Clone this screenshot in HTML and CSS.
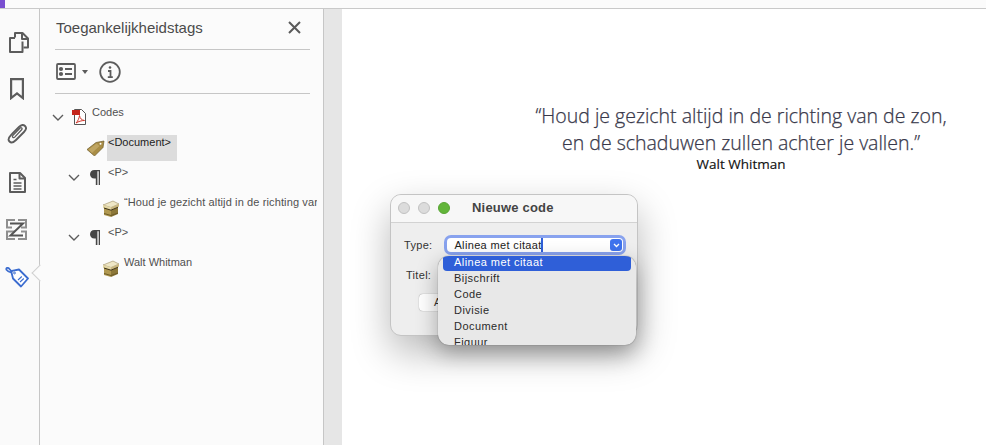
FILE: index.html
```html
<!DOCTYPE html>
<html lang="nl">
<head>
<meta charset="utf-8">
<title>Toegankelijkheidstags</title>
<link rel="stylesheet" href="styles.css">
</head>
<body>
<div class="topbar"><span class="accent"></span></div>
<div class="main">
  <nav class="rail">
    <svg class="rail-icon r1" width="20" height="21" viewBox="0 0 20 21" fill="none" stroke="#5c5c5c" stroke-width="2" stroke-linejoin="round"><path d="M6 5.500V1h7.500l5.500 5.500V15.500h-4.500"/><path d="M13 1.500V7h5.500"/><path d="M6 6H1v14h12.500V9.500"/></svg>
    <svg class="rail-icon r2" width="14" height="22" viewBox="0 0 14 22" fill="none" stroke="#5c5c5c" stroke-width="2.200"><path d="M1.100 1.100h11.800v19L7 15.500l-5.900 4.600z"/></svg>
    <svg class="rail-icon r3" width="20" height="21" viewBox="0 0 20 21" fill="none" stroke="#5c5c5c" stroke-width="1.900"><path d="M12 4 4.200 11.800C1 15 1 17 2.500 18.500S6 20 9 17L17 9c2.500-2.500 2.500-4.500 1-6S14.500 1.500 12 4L4.800 11.200"/><path d="M14.800 6.500c1-1-.7-2.700-1.700-1.500L6 12.300c-1.500 1.500.3 3.200 1.700 1.800L14.800 6.500z" stroke-width="1.300"/></svg>
    <svg class="rail-icon r4" width="17" height="21" viewBox="0 0 17 21" fill="none" stroke="#5c5c5c" stroke-width="2" stroke-linejoin="round"><path d="M1 1h10l5 5v14H1z"/><path d="M10.500 1.500V6.500H16"/><path d="M4.500 7.500h3M4.500 11h8M4.500 14h8M4.500 17h8" stroke-width="1.500"/></svg>
    <svg class="rail-icon r5" width="21" height="21" viewBox="0 0 21 21" fill="none" stroke="#8f8f8f" stroke-width="2"><path d="M9 1H1v7.500h5M12 1h8v7.500h-5"/><path d="M9 12.500H1V20h8M15 12.500h5V20h-8"/><path d="M4 4.500h13L4.500 16.500H17" stroke="#555" stroke-width="2"/></svg>
    <div class="rail-active">
      <svg class="rail-icon" width="24" height="22" viewBox="0 0 24 22" fill="none" stroke="#3b6ccf" stroke-width="1.800" stroke-linejoin="round"><path d="M7 6 4.500 3C3 1 .5 2 1.500 3.800 2.300 5 4 6 6 6.500"/><path d="M7 4.800 14 3.500 23 12.500 16 20.500 8 12.500 6.500 6.500z" fill="#fff"/><circle cx="9.500" cy="7" r=".9" stroke-width="1"/><path d="M13 14l3.800-3.500M15 16l3.800-3.500" stroke-width="1.100"/></svg>
    </div>
  </nav>
  <aside class="panel">
    <header class="panel-head">
      <h1 class="panel-title">Toegankelijkheidstags</h1>
      <svg width="13" height="13" viewBox="0 0 13 13" stroke="#5a5a5a" stroke-width="2"><path d="M1 1l11 11M12 1 1 12"/></svg>
    </header>
    <div class="toolbar">
      <svg width="20" height="17" viewBox="0 0 20 17" fill="none" stroke="#5c5c5c" stroke-width="1.800"><rect x="1" y="1" width="18" height="15" rx="1"/><path d="M9 6h7M9 11h7"/><circle cx="5" cy="6" r="1.200" fill="#5c5c5c"/><circle cx="5" cy="11" r="1.200" fill="#5c5c5c"/></svg>
      <span class="caret"></span>
      <svg class="info" width="22" height="22" viewBox="0 0 22 22" fill="none" stroke="#5c5c5c"><circle cx="11" cy="11" r="9.800" stroke-width="1.800"/><path d="M9 10h2.500v6M8.800 16.200h5" stroke-width="1.800"/><circle cx="11" cy="6.500" r="1.300" fill="#5c5c5c" stroke="none"/></svg>
    </div>
    <ul class="tree">
      <li class="row lvl0">
        <svg class="chev" width="12" height="7" viewBox="0 0 12 7" fill="none" stroke="#5c5c5c" stroke-width="1.400"><path d="M1 1l5 5 5-5"/></svg>
        <svg class="ico pdf" width="14" height="16" viewBox="0 0 14 16" fill="none"><path d="M2.500.5h7l4 4v11h-11z" fill="#fff" stroke="#555"/><rect x="0" y="1" width="8" height="5" fill="#c5251b"/><path d="M4 14c2-2 3-4.500 3.500-7.500.5 3 2 4.500 5 5-3 0-6 1-8.500 2.500z" stroke="#d2382c"/></svg>
        <span class="label">Codes</span>
      </li>
      <li class="row lvl1 doc">
        <svg class="ico" width="18" height="16" viewBox="0 0 18 16"><path d="M0 9.500 9 2.500 17 1l-1 6.500L7.500 16z" fill="#a98d45" stroke="#6f5d2c" stroke-width=".7"/><path d="M1.500 9.500 9.500 3.500l3 2.500L5 13z" fill="#bfa562"/><circle cx="13.500" cy="3.800" r="1" fill="#fff"/></svg>
        <span class="label selected">&lt;Document&gt;</span>
      </li>
      <li class="row lvl1b">
        <svg class="chev" width="12" height="7" viewBox="0 0 12 7" fill="none" stroke="#5c5c5c" stroke-width="1.400"><path d="M1 1l5 5 5-5"/></svg>
        <svg class="ico para" width="10" height="15" viewBox="0 0 10 15"><path d="M4.500 0H10v15H8.700V1.200H7.400V15H5.800V8.500H4.500C1.500 8.500 0 6.200 0 4.200S1.500 0 4.500 0z" fill="#464646"/></svg>
        <span class="label">&lt;P&gt;</span>
      </li>
      <li class="row lvl2">
        <svg class="ico" width="16" height="17" viewBox="0 0 16 17"><path d="M0 5 10 1l6 3-8 3.500z" fill="#efe7c6" stroke="#8a7a4a" stroke-width=".5"/><path d="M0 5l8 2.500v2.500L0 8z" fill="#e2d6a4"/><path d="M8 7.500 16 4v2.500L8 10z" fill="#c9b77f"/><path d="M1 8l7 2.200V17l-7-2z" fill="#b09850"/><path d="M8 10.200l7-3V14l-7 3z" fill="#8c7738"/><path d="M1 8l7 2.200 7-3" fill="none" stroke="#3e3214"/><path d="M1 13.500l7 2 7-2.500" fill="none" stroke="#6d5c28"/></svg>
        <span class="label clip">“Houd je gezicht altijd in de richting van de zon,</span>
      </li>
      <li class="row lvl1b">
        <svg class="chev" width="12" height="7" viewBox="0 0 12 7" fill="none" stroke="#5c5c5c" stroke-width="1.400"><path d="M1 1l5 5 5-5"/></svg>
        <svg class="ico para" width="10" height="15" viewBox="0 0 10 15"><path d="M4.500 0H10v15H8.700V1.200H7.400V15H5.800V8.500H4.500C1.500 8.500 0 6.200 0 4.200S1.500 0 4.500 0z" fill="#464646"/></svg>
        <span class="label">&lt;P&gt;</span>
      </li>
      <li class="row lvl2">
        <svg class="ico" width="16" height="17" viewBox="0 0 16 17"><path d="M0 5 10 1l6 3-8 3.500z" fill="#efe7c6" stroke="#8a7a4a" stroke-width=".5"/><path d="M0 5l8 2.500v2.500L0 8z" fill="#e2d6a4"/><path d="M8 7.500 16 4v2.500L8 10z" fill="#c9b77f"/><path d="M1 8l7 2.200V17l-7-2z" fill="#b09850"/><path d="M8 10.200l7-3V14l-7 3z" fill="#8c7738"/><path d="M1 8l7 2.200 7-3" fill="none" stroke="#3e3214"/><path d="M1 13.500l7 2 7-2.500" fill="none" stroke="#6d5c28"/></svg>
        <span class="label">Walt Whitman</span>
      </li>
    </ul>
  </aside>
  <div class="gutter"></div>
  <main class="page">
    <blockquote class="quote">“Houd je gezicht altijd in de richting van de zon,<br>en de schaduwen zullen achter je vallen.”</blockquote>
    <p class="author">Walt Whitman</p>
  </main>
</div>

<section class="dialog">
  <div class="dialog-title">
    <span class="light"></span><span class="light"></span><span class="light green"></span>
    <span class="dialog-name">Nieuwe code</span>
  </div>
  <div class="form-row type-row">
    <span class="form-label">Type:</span>
    <div class="combo">
      <span class="combo-text">Alinea met citaat</span><span class="cursor"></span>
      <span class="combo-btn"><svg width="7" height="5" viewBox="0 0 7 5" fill="none" stroke="#fff" stroke-width="1.300"><path d="M1 1l2.500 2.500L6 1"/></svg></span>
    </div>
  </div>
  <div class="form-row title-row"><span class="form-label">Titel:</span></div>
  <div class="btn-row"><span class="btn">Annuleren</span></div>
  <ul class="menu">
    <li class="menu-item active">Alinea met citaat</li>
    <li class="menu-item">Bijschrift</li>
    <li class="menu-item">Code</li>
    <li class="menu-item">Divisie</li>
    <li class="menu-item">Document</li>
    <li class="menu-item">Figuur</li>
  </ul>
</section>
</body>
</html>
```
FILE: styles.css
```css
* { box-sizing: border-box; }
html, body { margin: 0; padding: 0; height: 100%; overflow: hidden; background: #fff; }
body { font-family: "Liberation Sans", Arial, sans-serif; display: flex; flex-direction: column; }

.topbar { height: 9px; flex: none; background: #fbfbfb; border-bottom: 1px solid #c9c9c9; }
.accent { display: block; width: 5px; height: 8px; background: #7a4fd0; }

.main { flex: 1; display: flex; min-height: 0; }

.rail { width: 40px; flex: none; background: #fafafa; border-right: 1px solid #c6c6c6; display: flex; flex-direction: column; align-items: flex-start; position: relative; }
.rail-icon { display: block; flex: none; }
.r1 { margin: 23px 0 0 9px; }
.r2 { margin: 25px 0 0 10px; }
.r3 { margin: 23px 0 0 7px; }
.r4 { margin: 28px 0 0 9px; }
.r5 { margin: 26px 0 0 6px; }
.rail-active { margin: 26px 0 0 5px; }
.rail-active::before { content: ""; position: absolute; left: 34px; top: 258px; width: 11px; height: 11px; background: #fbfbfb; border-left: 1px solid #cfcfcf; border-bottom: 1px solid #cfcfcf; transform: rotate(45deg); }

.panel { width: 284px; flex: none; background: #fbfbfb; border-right: 1px solid #c6c6c6; padding: 0 13px 0 15px; display: flex; flex-direction: column; }
.panel-head { height: 41px; flex: none; display: flex; align-items: center; justify-content: space-between; border-bottom: 1px solid #c6c6c6; padding: 0 9px 4px 1px; }
.panel-title { margin: 0; font-size: 15px; font-weight: 400; color: #4b4b4b; }

.toolbar { height: 44px; flex: none; display: flex; align-items: center; border-bottom: 1px solid #c6c6c6; padding: 0 1px; }
.caret { width: 0; height: 0; border: 3.500px solid transparent; border-top: 4px solid #5c5c5c; border-bottom: 0; margin-left: 6px; }
.info { margin-left: 11px; }

.tree { list-style: none; margin: 0; padding: 4px 0 0; }
.row { height: 30px; display: flex; align-items: center; font-size: 11px; color: #505050; position: relative; white-space: nowrap; }
.chev { flex: none; margin-top: 8px; }
.ico { flex: none; margin-top: 8px; }
.label { align-self: flex-start; line-height: 13px; margin-top: 8px; }
.lvl0 { margin-left: -3px; }
.lvl0 .ico { margin-left: 8px; margin-right: 6px; }
.lvl1 { padding-left: 32px; }
.lvl1 .ico { margin-right: 2px; margin-top: 9px; }
.lvl1b { padding-left: 13px; }
.lvl1b .para { margin-left: 10px; margin-right: 8px; }
.lvl2 { padding-left: 48px; }
.lvl2 .ico { margin-right: 5px; margin-top: 10px; }
.label.selected { background: #dcdcdc; color: #222; height: 26px; width: 70px; padding: 1px 0 0 1px; margin-top: 7px; }
.clip { flex: none; width: 193px; overflow: hidden; letter-spacing: .12px; }

.gutter { width: 18px; flex: none; background: #e6e6e6; }

.page { flex: 1; background: #fff; padding: 93px 0 0 154px; display: flex; flex-direction: column; align-items: center; font-family: "Open Sans", sans-serif; }
.quote { margin: 0; font-size: 19.5px; line-height: 27px; font-weight: 300; color: #38384a; text-align: center; white-space: nowrap; -webkit-text-stroke: .25px #38384a; }
.author { margin: 0; font-size: 13.5px; line-height: 16px; font-weight: 400; color: #111; -webkit-text-stroke: .15px #111; }

.dialog { position: absolute; left: 390px; top: 194px; width: 248px; height: 142px; background: #eeeeee; border: 1px solid #c4c4c4; border-radius: 11px; box-shadow: 0 16px 38px rgba(0,0,0,.28); }
.dialog-title { height: 28px; display: flex; align-items: center; padding: 0 0 2px 7px; gap: 8px; background: #f7f7f7; border-bottom: 1px solid #d2d2d2; border-radius: 10px 10px 0 0; }
.light { width: 12px; height: 12px; border-radius: 50%; background: #dcdcdc; border: 1px solid #c2c2c2; }
.light.green { background: #62b53a; border-color: #58a534; }
.dialog-name { font-size: 13px; font-weight: 700; color: #444; margin-left: 14px; letter-spacing: .2px; }
.form-row { display: flex; align-items: center; font-size: 11px; color: #333; }
.form-label { letter-spacing: .3px; }
.type-row { height: 14px; margin-top: 15px; padding-left: 13px; }
.combo { position: relative; margin-left: 15px; width: 176px; height: 14px; background: #fff; border-radius: 4px; box-shadow: 0 0 0 3px #88a2ee; display: flex; align-items: center; padding-left: 7px; letter-spacing: .35px; color: #222; }
.cursor { width: 2px; height: 14px; background: #2f5fd8; margin-left: -1px; }
.combo-btn { position: absolute; right: 1px; top: 1px; width: 12px; height: 12px; border-radius: 3px; background: #3f73ee; display: flex; align-items: center; justify-content: center; }
.title-row { margin-top: 17px; padding-left: 15px; }
.btn-row { margin-top: 13px; padding-left: 28px; }
.btn { display: block; width: 80px; height: 17px; background: #fff; border-radius: 4px; box-shadow: 0 0 1px rgba(0,0,0,.5); font-size: 11px; line-height: 17px; text-align: center; color: #333; }

.menu { list-style: none; position: absolute; left: 47px; top: 61px; width: 198px; height: 89px; margin: 0; padding: 0 5px; background: #e8e8e8; border-radius: 11px; box-shadow: 0 0 1px rgba(0,0,0,.6), 0 8px 22px rgba(0,0,0,.32); overflow: hidden; font-size: 11px; letter-spacing: .45px; color: #2a2a2a; }
.menu-item { height: 16px; line-height: 16px; padding-left: 11px; }
.menu-item.active { background: #2f5fd8; color: #fff; border-radius: 0 0 4px 4px; height: 15px; line-height: 13px; margin-bottom: -1px; }
```
